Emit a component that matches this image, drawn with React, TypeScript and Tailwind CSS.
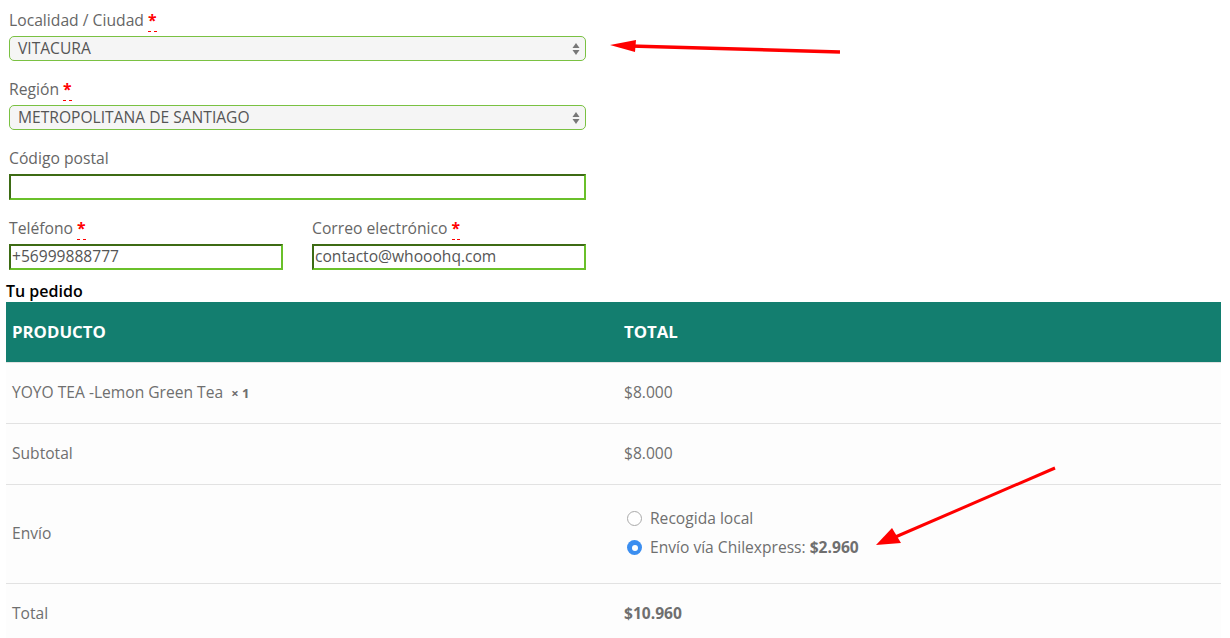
import React from 'react';

const font = { fontFamily: '"Open Sans", "Noto Sans", sans-serif' };

function Req() {
  return (
    <abbr className="text-[#ff0000] font-bold no-underline border-b border-dashed border-[#ff0000] leading-none">*</abbr>
  );
}

function Label({ children, req }: { children: React.ReactNode; req?: boolean }) {
  return (
    <div className="h-[22px] leading-[22px] text-[15.7px] text-[#666]">
      {children} {req && <Req />}
    </div>
  );
}

function SelectBox({ value }: { value: string }) {
  return (
    <div className="mt-[5px] h-[25px] flex items-center justify-between rounded-[5px] border border-[#7ac142] bg-[#f5f5f5] pl-[8px] pr-[5px] text-[15.6px] text-[#555]">
      <span>{value}</span>
      <svg width="8" height="14" viewBox="0 0 8 14">
        <path d="M4 1 L7.5 6 L0.5 6 Z" fill="#777" />
        <path d="M4 13 L7.5 8 L0.5 8 Z" fill="#777" />
      </svg>
    </div>
  );
}

function TextBox({ value }: { value?: string }) {
  return (
    <div className="mt-[5px] h-[26px] flex items-center border-2 border-t-[#3d6b14] border-l-[#3d6b14] border-b-[#6ac02a] border-r-[#6ac02a] px-[1px] text-[15.6px] text-[#555]">
      {value}
    </div>
  );
}

function Row({ left, right, tall }: { left: React.ReactNode; right: React.ReactNode; tall?: boolean }) {
  return (
    <div className={`grid grid-cols-[612px_1fr] border-t border-[#e2e2e2] bg-[#fdfdfd] ${tall ? 'h-[99px]' : 'h-[61px]'}`}>
      <div className="flex items-center pl-[6px] text-[15.6px] text-[#6f6f6f]">{left}</div>
      <div className="flex items-center pl-[6px] text-[15.6px] text-[#6f6f6f]">{right}</div>
    </div>
  );
}

export default function App() {
  return (
    <div className="relative w-[1230px] h-[638px] overflow-hidden bg-white" style={font}>
      <div className="ml-[9px] w-[577px] pt-[9px]">
        <Label req>Localidad / Ciudad</Label>
        <SelectBox value="VITACURA" />

        <div className="mt-[17px]">
          <Label req>Región</Label>
          <SelectBox value="METROPOLITANA DE SANTIAGO" />
        </div>

        <div className="mt-[17px]">
          <Label>Código postal</Label>
          <TextBox />
        </div>

        <div className="mt-[17px] grid grid-cols-[274px_274px] justify-between">
          <div>
            <Label req>Teléfono</Label>
            <TextBox value="+56999888777" />
          </div>
          <div>
            <Label req>Correo electrónico</Label>
            <TextBox value="contacto@whooohq.com" />
          </div>
        </div>
      </div>

      <div className="ml-[6px] w-[1215px]">
        <h3 className="mt-[11px] h-[21px] leading-[21px] text-[16px] font-semibold text-black">Tu pedido</h3>
        <div className="grid grid-cols-[612px_1fr] h-[60px] bg-[#137e6f] text-white text-[16.8px] font-bold">
          <div className="flex items-center pl-[6px]">PRODUCTO</div>
          <div className="flex items-center pl-[6px]">TOTAL</div>
        </div>
        <Row
          left={
            <span>
              YOYO TEA -Lemon Green Tea&nbsp;&nbsp;<strong className="text-[13px] font-bold">× 1</strong>
            </span>
          }
          right="$8.000"
        />
        <Row left="Subtotal" right="$8.000" />
        <Row
          tall
          left="Envío"
          right={
            <div className="flex flex-col -mt-[2px]">
              <div className="flex items-center h-[29px] gap-[8px] ml-[3px]">
                <span className="w-[15px] h-[15px] rounded-full border border-[#aaa] bg-white" />
                <span>Recogida local</span>
              </div>
              <div className="flex items-center h-[29px] gap-[8px] ml-[3px]">
                <span className="w-[15px] h-[15px] rounded-full bg-[#3b8ef0] flex items-center justify-center">
                  <span className="w-[6px] h-[6px] rounded-full bg-white" />
                </span>
                <span>
                  Envío vía Chilexpress: <strong className="font-bold">$2.960</strong>
                </span>
              </div>
            </div>
          }
        />
        <Row left="Total" right={<strong className="font-bold">$10.960</strong>} />
      </div>

      <svg className="absolute left-0 top-0 pointer-events-none" width="1230" height="638">
        <line x1="840" y1="52" x2="630" y2="46" stroke="#ff0000" strokeWidth="3.5" />
        <path d="M610 45 L636 40 L635 52 Z" fill="#ff0000" />
        <line x1="1055" y1="468" x2="893" y2="538" stroke="#ff0000" strokeWidth="3" />
        <path d="M876 545 L892 528 L901 543 Z" fill="#ff0000" />
      </svg>
    </div>
  );
}
